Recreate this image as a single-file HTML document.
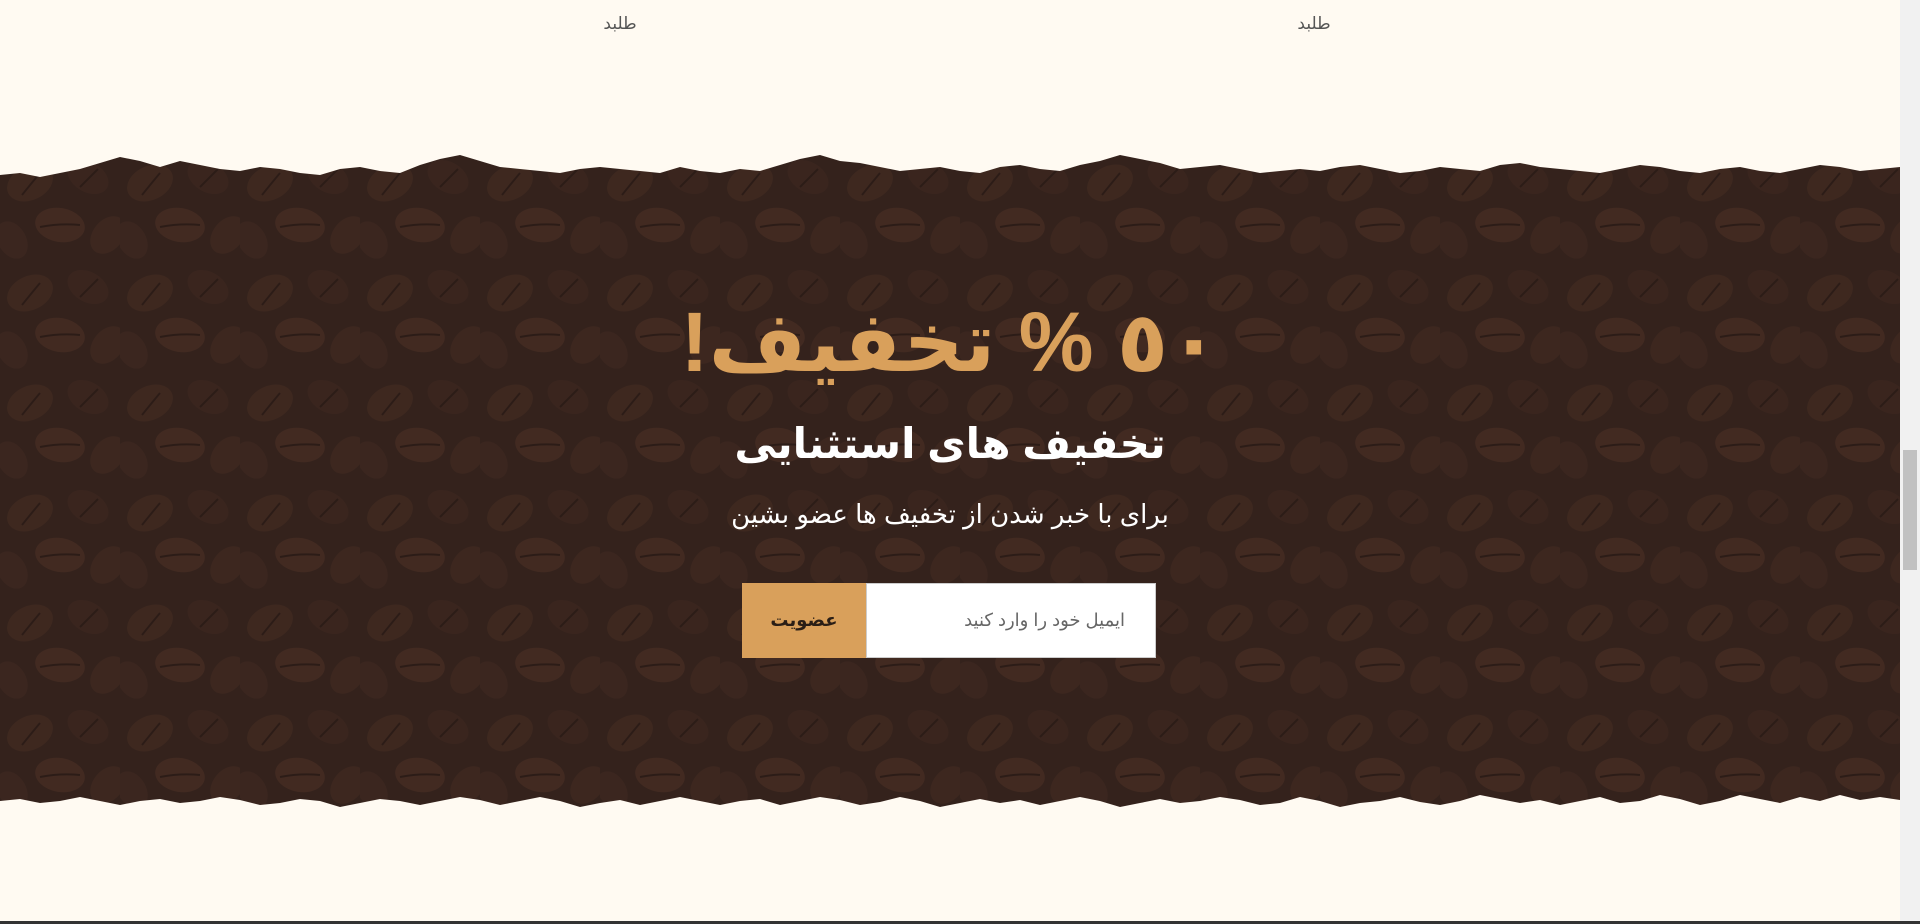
<!DOCTYPE html>
<html lang="fa" dir="rtl">
<head>
<meta charset="utf-8">
<style>
html,body{margin:0;padding:0;}
body{width:1920px;height:924px;overflow:hidden;background:#fffaf2;position:relative;font-family:"Liberation Sans","DejaVu Sans","Noto Sans CJK SC",sans-serif;}
.top{position:absolute;top:10px;font-size:17px;color:#555;text-align:center;width:320px;line-height:28px;}
.band{position:absolute;left:0;top:155px;width:1900px;height:660px;}
h1{position:absolute;left:0;width:1900px;top:292px;margin:0;font-size:84px;font-weight:bold;color:#d9a05b;line-height:100px;text-align:center;}
h2{position:absolute;left:0;width:1900px;top:414px;margin:0;font-size:42px;font-weight:bold;color:#fff;line-height:60px;text-align:center;}
p.sub{position:absolute;left:0;width:1900px;top:494px;margin:0;font-size:26px;color:#fff;line-height:40px;text-align:center;}
.form{position:absolute;left:742px;top:583px;width:414px;height:75px;}
.btn{position:absolute;left:0;top:0;width:124px;height:75px;background:#d9a05b;color:#2a1e16;font-weight:bold;font-size:18px;line-height:75px;text-align:center;}
.inp{position:absolute;left:124px;top:0;width:290px;height:75px;background:#fff;border:1px solid #ccc;box-sizing:border-box;color:#666;font-size:18px;line-height:73px;text-align:right;padding-right:30px;}
.sb{position:absolute;right:0;top:0;width:20px;height:924px;background:#f1f1f1;}
.thumb{position:absolute;right:3px;top:450px;width:14px;height:120px;background:#c1c1c1;}
.bottomline{position:absolute;left:0;bottom:0;width:1920px;height:3px;background:#333;}
</style>
</head>
<body>
<div class="top" style="left:460px;">طلبد</div>
<div class="top" style="left:1154px;">طلبد</div>

<svg class="band" viewBox="0 0 1900 660" preserveAspectRatio="none" xmlns="http://www.w3.org/2000/svg">
<defs>
<pattern id="beans" width="120" height="110" patternUnits="userSpaceOnUse">
<rect width="120" height="110" fill="#34221c"/>
<ellipse cx="30" cy="28" rx="24" ry="17" fill="#3e281f" transform="rotate(-25 30 28)"/>
<ellipse cx="88" cy="22" rx="22" ry="15" fill="#3a251e" transform="rotate(30 88 22)"/>
<ellipse cx="60" cy="70" rx="25" ry="17" fill="#422a21" transform="rotate(10 60 70)"/>
<ellipse cx="12" cy="85" rx="20" ry="14" fill="#3b261f" transform="rotate(60 12 85)"/>
<ellipse cx="108" cy="80" rx="21" ry="15" fill="#3d271f" transform="rotate(-50 108 80)"/>
<path d="M40 18 Q30 30 22 40 M98 14 Q88 24 80 32 M80 70 Q60 68 40 72" stroke="#2c1c17" stroke-width="2" fill="none"/>
</pattern>
</defs>
<path fill="url(#beans)" d="M0 20 L20 18 L40 22 L60 18 L80 14 L100 8 L120 2 L140 6 L160 12 L180 6 L200 10 L220 14 L240 16 L260 12 L280 14 L300 18 L320 20 L340 14 L360 12 L380 16 L400 18 L420 10 L440 4 L460 0 L480 6 L500 12 L520 14 L540 16 L560 18 L580 14 L600 12 L620 14 L640 16 L660 18 L680 12 L700 16 L720 18 L740 14 L760 16 L780 10 L800 4 L820 0 L840 6 L860 8 L880 12 L900 16 L920 14 L940 12 L960 16 L980 18 L1000 12 L1020 10 L1040 14 L1060 16 L1080 10 L1100 6 L1120 0 L1140 4 L1160 8 L1180 14 L1200 12 L1220 10 L1240 14 L1260 18 L1280 16 L1300 14 L1320 16 L1340 12 L1360 10 L1380 14 L1400 18 L1420 16 L1440 12 L1460 14 L1480 16 L1500 10 L1520 8 L1540 12 L1560 14 L1580 16 L1600 18 L1620 14 L1640 10 L1660 12 L1680 16 L1700 18 L1720 14 L1740 12 L1760 16 L1780 18 L1800 14 L1820 10 L1840 12 L1860 16 L1880 14 L1900 12 L1900 645 L1880 642 L1860 645 L1840 640 L1820 646 L1800 642 L1780 648 L1760 644 L1740 640 L1720 646 L1700 650 L1680 644 L1660 640 L1640 646 L1620 648 L1600 642 L1580 646 L1560 650 L1540 645 L1520 648 L1500 644 L1480 640 L1460 646 L1440 650 L1420 647 L1400 642 L1380 646 L1360 648 L1340 652 L1320 646 L1300 642 L1280 648 L1260 650 L1240 645 L1220 642 L1200 646 L1180 648 L1160 644 L1140 648 L1120 652 L1100 646 L1080 642 L1060 646 L1040 650 L1020 645 L1000 648 L980 644 L960 648 L940 652 L920 646 L900 642 L880 647 L860 650 L840 645 L820 642 L800 646 L780 650 L760 644 L740 646 L720 650 L700 646 L680 642 L660 646 L640 650 L620 645 L600 648 L580 652 L560 646 L540 642 L520 646 L500 650 L480 645 L460 642 L440 646 L420 650 L400 646 L380 644 L360 648 L340 652 L320 646 L300 644 L280 648 L260 650 L240 645 L220 642 L200 646 L180 648 L160 644 L140 646 L120 650 L100 646 L80 642 L60 646 L40 648 L20 644 L0 646 Z"/>
</svg>

<h1>٥٠ % تخفیف!</h1>
<h2>تخفیف های استثنایی</h2>
<p class="sub">برای با خبر شدن از تخفیف ها عضو بشین</p>
<div class="form"><div class="btn">عضویت</div><div class="inp">ایمیل خود را وارد کنید</div></div>

<div class="sb"><div class="thumb"></div></div>
<div class="bottomline"></div>
</body>
</html>
